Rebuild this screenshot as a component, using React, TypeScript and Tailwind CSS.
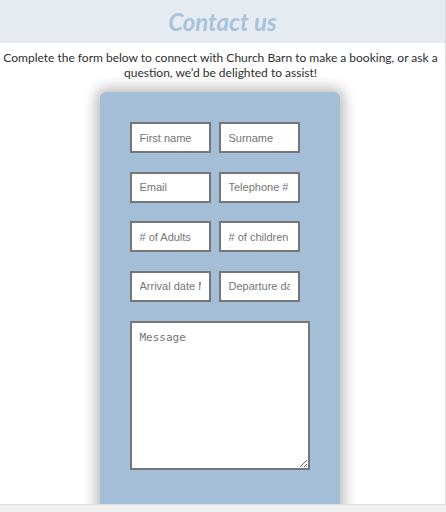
import React from "react";

export default function App() {
  const inputCls =
    "w-[81px] h-[31px] border-2 border-[#767676] bg-white px-[8px] text-[11px] text-[#333] placeholder:text-[#757575] outline-none";
  const rows: [string, string][] = [
    ["First name", "Surname"],
    ["Email", "Telephone #"],
    ["# of Adults", "# of children"],
    ["Arrival date MM/DD", "Departure date MM/DD"],
  ];
  return (
    <div className="w-[446px] h-[512px] overflow-hidden flex flex-col bg-[#f0f0f0]">
      <div className="flex h-[504px]">
        <div className="w-[445px] h-full bg-white flex flex-col overflow-hidden">
          <div className="h-[43px] bg-[#e6ebf2] flex items-center justify-center shrink-0">
            <h1
              className="text-[24px] font-bold italic text-[#a7c3dc] leading-none pt-[1px]"
              style={{ fontFamily: "Lato, 'Liberation Sans', sans-serif" }}
            >
              Contact us
            </h1>
          </div>
          <p
            className="text-center text-[12px] leading-[15px] text-[#2e2e2e] mt-[7px] pr-[4px] whitespace-nowrap"
            style={{ fontFamily: "Lato, 'Liberation Sans', sans-serif" }}
          >
            Complete the form below to connect with Church Barn to make a booking, or ask a
            <br />
            question, we’d be delighted to assist!
          </p>
          <div className="flex justify-center mt-[12px] pr-[6px]">
            <div className="w-[240px] h-[440px] bg-[#a3bed6] rounded-[6px] shadow-[0_0_14px_4px_rgba(0,0,0,0.28)] pt-[30px] pl-[30px] flex flex-col gap-[18.5px] shrink-0">
              {rows.map(([a, b]) => (
                <div key={a} className="flex gap-[8px]">
                  <input
                    className={inputCls}
                    placeholder={a}
                    style={{ fontFamily: "Arial, 'Liberation Sans', sans-serif" }}
                  />
                  <input
                    className={inputCls}
                    placeholder={b}
                    style={{ fontFamily: "Arial, 'Liberation Sans', sans-serif" }}
                  />
                </div>
              ))}
              <textarea
                className="w-[180px] h-[149px] mt-[1px] border-2 border-[#767676] bg-white px-[8px] py-[7px] text-[11px] placeholder:text-[#757575] outline-none"
                placeholder="Message"
                style={{ fontFamily: "'DejaVu Sans Mono', 'Liberation Mono', monospace" }}
              />
            </div>
          </div>
        </div>
        <div className="w-[1px] h-full bg-[#dcdcdc]" />
      </div>
      <div className="h-[8px] border-t border-[#dedede] bg-[#f0f0f0]" />
    </div>
  );
}
